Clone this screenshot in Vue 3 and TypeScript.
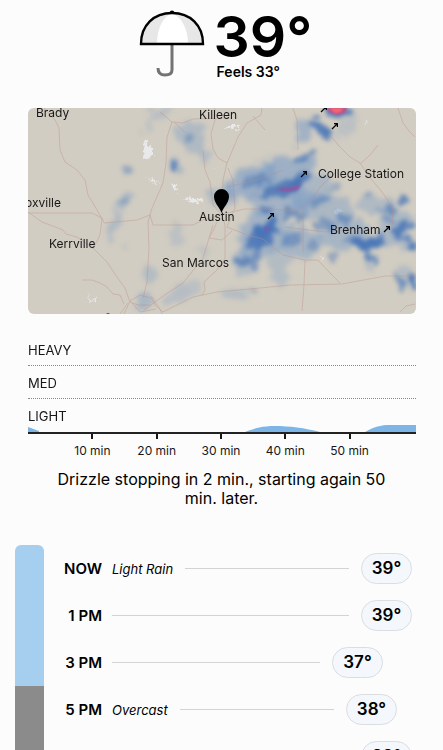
<script setup lang="ts">
interface Place {
  name: string
  x: number
  y: number
}

/** x, y, horizontal radius, vertical radius, rotation, opacity */
type Cell = [number, number, number, number, number, number]

interface Hour {
  label: string
  condition?: string
  temp: number
}

const places: Place[] = [
  { name: 'Brady', x: 36, y: 117 },
  { name: 'Killeen', x: 199, y: 119 },
  { name: 'College Station', x: 318, y: 178 },
  { name: 'oxville', x: 25, y: 207 },
  { name: 'Austin', x: 199, y: 221 },
  { name: 'Kerrville', x: 49, y: 248 },
  { name: 'San Marcos', x: 162, y: 267 },
  { name: 'Brenham', x: 330, y: 234 },
]

const arrows: [number, number][] = [
  [324, 109],
  [335, 126],
  [304, 174],
  [271, 216],
  [387, 229],
]

const roads: string[] = [
  'M44 108L55 120 59 128 60 150 65 162 77 170 85 180 88 195 96 208 102 219 100 235 93 249',
  'M160 112L172 122 167 137 166 163 163 183 152 208 148 222 149 248 147 282 143 298',
  'M172 122L183 123 193 119 228 118M174 122L186 133',
  'M215 108L215 120 211 134 213 149 218 158 227 163',
  'M262 108L261 115 247 123 238 137 227 163 223 180 222 215',
  'M253 116L265 130M203 150L205 170 210 182 213 205 222 215',
  'M227 187L257 180 283 170M228 168L233 180 235 208 227 227',
  'M398 108L403 123 409 131 415 137M293 108L297 120 298 150',
  'M328 133L340 147 350 157 360 163 372 180 382 192 393 208 392 228',
  'M378 145L370 155 360 164M335 173L320 187 312 200 297 211',
  'M28 212L42 222 63 230 66 234 77 237 93 248 107 262 117 277 125 288 130 302',
  'M28 213L92 213 102 218 104 223 137 220 150 215 153 225 193 225 203 220 222 215',
  'M82 280L92 280 100 283 107 287 113 294 120 295 124 304M213 225L203 258 183 283 166 294 144 310',
  'M217 222L213 231 209 238 222 240 232 231M222 215L225 225 225 258 217 270 204 282 205 290 202 295',
  'M124 314L130 301 140 295 151 298 156 306 163 312 193 297 217 292 260 288 290 285 342 284 385 276 415 276',
  'M227 227L247 235 263 239 283 255 305 260 318 260 329 272 340 283M305 260L304 285 302 311',
  'M303 211L303 252M285 227L325 232 350 230M400 312L406 306 415 304M130 302L138 305 150 305',
  'M222 214L245 209 270 209 297 211M128 303L120 314M151 296L160 309 162 314M131 302L140 312 156 309',
]

const hazeCells: Cell[] = [
  [157, 114, 12, 4, -10, 0.3], [148, 128, 4, 7, 0, 0.35], [127, 170, 6, 5, 20, 0.5],
  [123, 202, 9, 5, -20, 0.5], [114, 225, 6, 16, 25, 0.4], [126, 246, 4, 3, 0, 0.22],
  [151, 274, 8, 8, 20, 0.35], [145, 302, 9, 5, -8, 0.45], [176, 296, 15, 9, -30, 0.3],
  [190, 135, 15, 16, 20, 0.4], [202, 152, 5, 9, 0, 0.4], [176, 165, 5, 7, 0, 0.5],
  [176, 234, 7, 12, 8, 0.25], [194, 285, 7, 10, 10, 0.25], [205, 250, 7, 9, 0, 0.22],
  [250, 180, 28, 15, -22, 0.6], [222, 198, 16, 11, 0, 0.4], [285, 170, 34, 15, -20, 0.6],
  [302, 130, 10, 15, 0, 0.55], [280, 200, 36, 16, -5, 0.55], [263, 235, 26, 24, -20, 0.55],
  [237, 294, 15, 4, 0, 0.35], [244, 263, 13, 15, 20, 0.4], [312, 190, 22, 17, -40, 0.45],
  [299, 241, 22, 17, 0, 0.5], [325, 208, 32, 15, 5, 0.45], [343, 235, 26, 15, -10, 0.5],
  [379, 205, 20, 11, 20, 0.4], [396, 229, 18, 18, 0, 0.45], [404, 278, 11, 11, 50, 0.35],
  [369, 257, 6, 12, -25, 0.35], [279, 266, 10, 20, 0, 0.35], [345, 128, 16, 7, -40, 0.25],
]

const rainCells: Cell[] = [
  [189, 138, 6, 7, 30, 0.4], [176, 165, 4, 5, 0, 0.8], [128, 170, 5, 3, 20, 0.3],
  [124, 202, 6, 3, -20, 0.3], [282, 188, 25, 6, -18, 0.8], [300, 180, 12, 5, -30, 0.8],
  [256, 182, 14, 6, -10, 0.5], [319, 127, 11, 6, 35, 0.85], [328, 134, 6, 6, 0, 0.8],
  [337, 111, 16, 6, 0, 0.8], [299, 160, 8, 3, -25, 0.75], [310, 155, 6, 3, -20, 0.6],
  [268, 211, 8, 5, 0, 0.8], [267, 229, 12, 9, -30, 0.95], [260, 240, 14, 9, -20, 0.85],
  [243, 262, 9, 5, -15, 0.7], [256, 257, 4, 14, 10, 0.5], [252, 291, 5, 3, 0, 0.3],
  [290, 213, 9, 5, 20, 0.6], [302, 216, 8, 4, -20, 0.55], [321, 201, 12, 4, -25, 0.5],
  [291, 241, 12, 5, -20, 0.5], [324, 226, 13, 6, 15, 0.5], [312, 245, 7, 5, 0, 0.4],
  [344, 219, 9, 6, 30, 0.55], [366, 243, 14, 6, -5, 0.95], [382, 239, 5, 4, 0, 0.85],
  [351, 239, 10, 4, 0, 0.6], [370, 258, 3, 11, -28, 0.75], [400, 228, 8, 6, -30, 0.85],
  [391, 209, 7, 4, 0, 0.6], [404, 200, 6, 3, -10, 0.75], [412, 246, 4, 7, 0, 0.85],
  [401, 284, 4, 9, -20, 0.6], [413, 281, 4, 8, -15, 0.95], [401, 238, 9, 3, 15, 0.7],
  [365, 194, 5, 3, 0, 0.4], [336, 187, 7, 4, -15, 0.35], [380, 211, 4, 2, 20, 0.5],
  [333, 257, 3, 5, 0, 0.5], [388, 221, 7, 3, 0, 0.5], [411, 225, 4, 4, 0, 0.7],
]

const snowPatches: string[] = [
  'M145 139L148 145 153 149 151 154 149 160 143 158 144 151Z',
  'M147 176L149 180 153 178 155 183 150 181Z',
  'M225 129L231 125 239 125 238 127 230 128Z',
  'M231 131L237 130 241 129 238 131Z',
  'M150 178L156 182 161 182 156 183Z',
  'M171 185L175 185 179 190 177 191Z',
  'M183 198L190 197 197 200 203 197 203 200 196 203 188 201Z',
  'M150 149L154 148 153 153 150 157Z',
  'M213 168L220 168 218 169Z',
  'M88 293L90 300 96 299 96 301 89 302Z',
  'M333 212L340 209 343 211 336 214Z',
  'M364 122L368 122 366 123Z',
  'M320 256L324 258 322 260Z',
]

const ticks: number[] = [10, 20, 30, 40, 50]
const levels: string[] = ['HEAVY', 'MED', 'LIGHT']

const hours: Hour[] = [
  { label: 'NOW', condition: 'Light Rain', temp: 39 },
  { label: '1 PM', temp: 39 },
  { label: '3 PM', temp: 37 },
  { label: '5 PM', condition: 'Overcast', temp: 38 },
  { label: '7 PM', temp: 39 },
]

const warmest = Math.max(...hours.map((h) => h.temp))
const pillInset = (temp: number): string => `${Math.round((warmest - temp) * 14.5)}px`
const spin = (c: Cell): string => `rotate(${c[4]} ${c[0]} ${c[1]})`
</script>

<template>
  <main class="weather">
    <header class="current">
      <svg class="umbrella" viewBox="0 0 66 68" aria-hidden="true">
        <path d="M33 35V60Q33 65 26 65Q19 65 19 58" fill="none" stroke="#737373" stroke-width="3" />
        <path d="M2 34C2 15 15 3 33 3S64 15 64 34Z" fill="#e7e7e7" />
        <path d="M18 34C18 18 24 7 33 3C42 7 49 18 49 34Z" fill="#fff" />
        <path d="M2 34C2 15 15 3 33 3S64 15 64 34Z" fill="none" stroke="#000" stroke-width="2.4" />
        <ellipse cx="33" cy="2" rx="2.2" ry="1.6" />
      </svg>
      <div class="reading">
        <h1 class="temperature">39°</h1>
        <p class="feels">Feels 33°</p>
      </div>
    </header>

    <svg class="map" viewBox="28 108 388 206" role="img" aria-label="Radar map around Austin">
      <defs>
        <filter id="haze" x="-10%" y="-10%" width="120%" height="120%" color-interpolation-filters="sRGB">
          <feTurbulence type="fractalNoise" baseFrequency="0.08" numOctaves="2" seed="8" result="noise" />
          <feDisplacementMap in="SourceGraphic" in2="noise" scale="20" xChannelSelector="R" yChannelSelector="G" />
          <feGaussianBlur stdDeviation="2.6" />
        </filter>
        <filter id="rain" x="-10%" y="-10%" width="120%" height="120%" color-interpolation-filters="sRGB">
          <feTurbulence type="fractalNoise" baseFrequency="0.1" numOctaves="2" seed="4" result="noise" />
          <feDisplacementMap in="SourceGraphic" in2="noise" scale="14" xChannelSelector="R" yChannelSelector="G" />
          <feGaussianBlur stdDeviation="2" />
        </filter>
        <filter id="core" x="-30%" y="-30%" width="160%" height="160%" color-interpolation-filters="sRGB">
          <feGaussianBlur stdDeviation="1" />
        </filter>
        <filter id="frost" x="-10%" y="-10%" width="120%" height="120%" color-interpolation-filters="sRGB">
          <feTurbulence type="fractalNoise" baseFrequency="0.3" numOctaves="2" seed="2" result="noise" />
          <feDisplacementMap in="SourceGraphic" in2="noise" scale="7" xChannelSelector="R" yChannelSelector="G" />
          <feGaussianBlur stdDeviation="0.4" />
        </filter>
      </defs>
      <rect x="28" y="108" width="388" height="206" fill="#d2cdc2" />
      <g filter="url(#frost)" fill="#e9e9ec">
        <path v-for="patch in snowPatches" :key="patch" :d="patch" />
      </g>
      <g filter="url(#haze)" fill="#7c9dc6">
        <ellipse
          v-for="(c, i) in hazeCells" :key="i"
          :cx="c[0]" :cy="c[1]" :rx="c[2]" :ry="c[3]" :transform="spin(c)" :opacity="c[5]"
        />
      </g>
      <g filter="url(#rain)" fill="#4674b7">
        <ellipse
          v-for="(c, i) in rainCells" :key="i"
          :cx="c[0]" :cy="c[1]" :rx="c[2]" :ry="c[3]" :transform="spin(c)" :opacity="c[5]"
        />
      </g>
      <g filter="url(#core)">
        <path d="M275 190L284 187 292 187 301 183 298 190 288 192Z" fill="#8d56a0" opacity="0.85" />
        <path d="M325 107H348L345 113 338 115 330 113Z" fill="#b5558f" />
        <path d="M329 108H343L341 112 335 113Z" fill="#ff626c" />
        <circle cx="267" cy="229" r="3" fill="#755eac" opacity="0.7" />
      </g>
      <g fill="none" stroke="#bc8f86" stroke-width="0.8" stroke-linejoin="round" opacity="0.5">
        <path v-for="road in roads" :key="road" :d="road" />
      </g>
      <g class="wind">
        <path
          v-for="a in arrows" :key="a.join()"
          :transform="`translate(${a[0]} ${a[1]})`"
          d="M-3 3L2 -2M-1 -2.4H2.4V1"
        />
      </g>
      <g class="places">
        <text v-for="p in places" :key="p.name" :x="p.x" :y="p.y">{{ p.name }}</text>
      </g>
      <path d="M221.5 213C219.5 207 214 203 214 196.5A7.5 7.5 0 0 1 229 196.5C229 203 223.5 207 221.5 213Z" />
      <path d="M106 314Q108 312 110 314Z" fill="#55504b" />
    </svg>

    <section class="chart" aria-label="Rain in the next hour">
      <div class="plot">
        <div v-for="level in levels" :key="level" class="level">{{ level }}</div>
        <svg class="intensity" viewBox="0 0 388 8" preserveAspectRatio="none" aria-hidden="true">
          <path
            d="M0 3L11 7V8H0ZM217 8C228 4 234 2 247 2C261 2 277 4 292 8ZM337 8C349 1 355 1 368 1H388V8Z"
            fill="#7cb5e6"
          />
        </svg>
      </div>
      <div class="axis">
        <span v-for="t in ticks" :key="t" class="tick">{{ t }} min</span>
      </div>
    </section>

    <p class="summary">Drizzle stopping in 2 min., starting again 50 min. later.</p>

    <section class="timeline" aria-label="Hourly forecast">
      <div class="strip">
        <span class="strip-rain"></span>
        <span class="strip-cloud"></span>
      </div>
      <ol class="hours">
        <li v-for="h in hours" :key="h.label" class="hour">
          <span class="time">{{ h.label }}</span>
          <span v-if="h.condition" class="condition">{{ h.condition }}</span>
          <span class="rule"></span>
          <span class="pill" :style="{ marginRight: pillInset(h.temp) }">{{ h.temp }}°</span>
        </li>
      </ol>
    </section>
  </main>
</template>

<style>
html,
body {
  background: #fcfcfc;
}
</style>

<style scoped>
.weather {
  box-sizing: border-box;
  height: 100vh;
  overflow: hidden;
  padding-top: 10px;
  color: #000;
  font-family: Inter, "Liberation Sans", sans-serif;
}

.current {
  display: flex;
  justify-content: center;
  gap: 9px;
  height: 98px;
  padding-left: 8px;
}

.umbrella {
  width: 66px;
  height: 68px;
}

.reading {
  display: flex;
  flex-direction: column;
}

.temperature {
  margin: 0;
  font-size: 57px;
  font-weight: 600;
  line-height: 54px;
}

.feels {
  margin: 0 0 0 3px;
  font-size: 14px;
  font-weight: 600;
  line-height: 16px;
}

.map {
  display: block;
  width: calc(100% - 55px);
  margin: 0 27px 0 28px;
  border-radius: 6px;
}

.places {
  fill: #171717;
  font-size: 12px;
}

.wind {
  fill: none;
  stroke: #000;
  stroke-width: 1.2;
}

.chart {
  margin: 19px 27px 0 28px;
}

.plot {
  position: relative;
  border-bottom: 2px solid #222;
}

.level {
  box-sizing: border-box;
  height: 33px;
  padding-top: 9px;
  border-bottom: 1px dotted #888;
  color: #171717;
  font-size: 13px;
  line-height: 16px;
}

.level:nth-child(3) {
  border-bottom: 0;
}

.intensity {
  position: absolute;
  bottom: 0;
  left: 0;
  width: 100%;
  height: 8px;
}

.axis {
  display: grid;
  grid-template-columns: repeat(5, 2fr);
  margin-right: 2px;
  padding: 0 calc(100% / 12);
}

.tick {
  display: flex;
  flex-direction: column;
  align-items: center;
  gap: 4px;
  color: #171717;
  font-size: 12px;
  line-height: 16px;
}

.tick::before {
  width: 2px;
  height: 5px;
  background: #171717;
  content: "";
}

.summary {
  max-width: 340px;
  margin: 11px auto 0;
  font-size: 16px;
  line-height: 19px;
  text-align: center;
}

.timeline {
  display: flex;
  gap: 20px;
  margin: 37px 31px 0 15px;
}

.strip {
  display: flex;
  flex: 0 0 29px;
  flex-direction: column;
  overflow: hidden;
  border-radius: 6px 6px 0 0;
}

.strip-rain {
  flex: 3;
  background: #a6cfef;
}

.strip-cloud {
  flex: 2;
  background: #8b8b8b;
}

.hours {
  flex: 1;
  margin: 0;
  padding: 0;
  list-style: none;
}

.hour {
  display: flex;
  align-items: center;
  height: 47px;
}

.time {
  width: 38px;
  margin-right: 10px;
  font-size: 15px;
  font-weight: 600;
  text-align: right;
  white-space: nowrap;
}

.condition {
  margin-right: 12px;
  font-size: 13px;
  font-style: italic;
}

.rule {
  flex: 1;
  height: 1px;
  background: #d3d3d3;
}

.pill {
  box-sizing: border-box;
  width: 51px;
  margin-left: 12px;
  border: 1px solid #dadde2;
  border-radius: 16px;
  background: #f4f7fb;
  font-size: 17px;
  font-weight: 600;
  line-height: 29px;
  text-align: center;
}
</style>
